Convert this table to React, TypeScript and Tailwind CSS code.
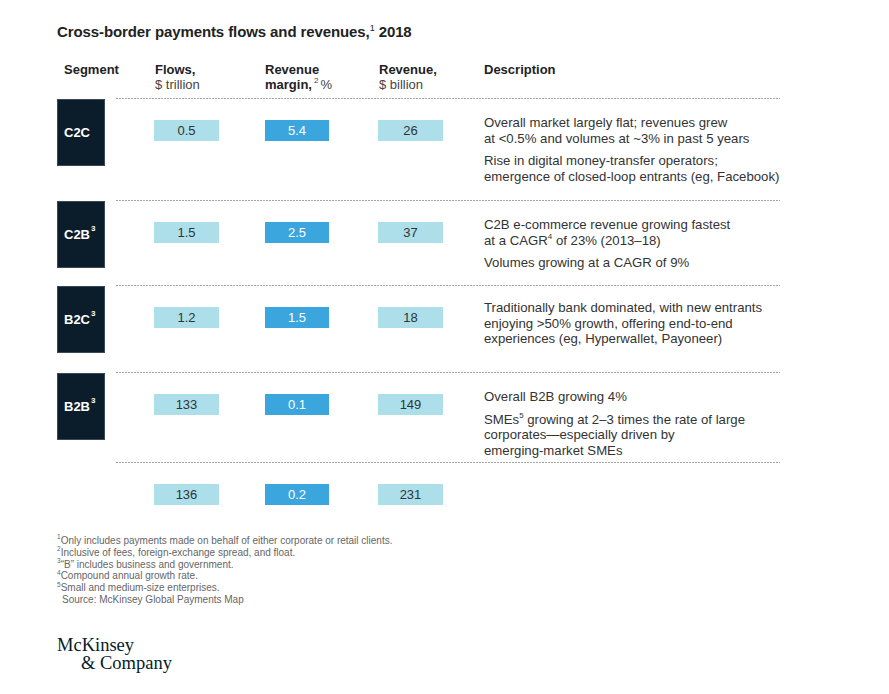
import React from "react";

const sans = { fontFamily: '"Liberation Sans", Arial, sans-serif' };

type Row = {
  seg: string;
  sup?: string;
  flows: string;
  margin: string;
  rev: string;
  desc: React.ReactNode[];
  h: string;
  descPt: string;
};

function Dashed() {
  return <div className="h-px w-full bg-[linear-gradient(to_right,#a3a3a3_60%,transparent_60%)] bg-[length:3px_1px] bg-repeat-x" />;
}

function Bars({ flows, margin, rev }: { flows: string; margin: string; rev: string }) {
  return (
    <div className="flex mt-[21px]">
      <div className="w-[38px] shrink-0" />
      <div className="w-[65px] h-[21px] bg-[#acdfea] text-[#333] text-[13px] flex items-center justify-center shrink-0">{flows}</div>
      <div className="w-[46px] shrink-0" />
      <div className="w-[64px] h-[21px] bg-[#3ba5dd] text-white text-[13px] flex items-center justify-center shrink-0">{margin}</div>
      <div className="w-[49px] shrink-0" />
      <div className="w-[65px] h-[21px] bg-[#acdfea] text-[#333] text-[13px] flex items-center justify-center shrink-0">{rev}</div>
    </div>
  );
}

const Sup = ({ children, cls = "text-[8px]" }: { children: React.ReactNode; cls?: string }) => (
  <sup className={`${cls} top-[-0.7em] relative`}>{children}</sup>
);

const rows: Row[] = [
  {
    seg: "C2C",
    flows: "0.5",
    margin: "5.4",
    rev: "26",
    h: "h-[102px]",
    descPt: "pt-[16px]",
    desc: [
      <>Overall market largely flat; revenues grew<br />at &lt;0.5% and volumes at ~3% in past 5 years</>,
      <>Rise in digital money-transfer operators;<br />emergence of closed-loop entrants (eg, Facebook)</>,
    ],
  },
  {
    seg: "C2B",
    sup: "3",
    flows: "1.5",
    margin: "2.5",
    rev: "37",
    h: "h-[85px]",
    descPt: "pt-[16px]",
    desc: [
      <>C2B e-commerce revenue growing fastest<br />at a CAGR<Sup>4</Sup> of 23% (2013–18)</>,
      <>Volumes growing at a CAGR of 9%</>,
    ],
  },
  {
    seg: "B2C",
    sup: "3",
    flows: "1.2",
    margin: "1.5",
    rev: "18",
    h: "h-[87px]",
    descPt: "pt-[14px]",
    desc: [
      <>Traditionally bank dominated, with new entrants<br />enjoying &gt;50% growth, offering end-to-end<br />experiences (eg, Hyperwallet, Payoneer)</>,
    ],
  },
  {
    seg: "B2B",
    sup: "3",
    flows: "133",
    margin: "0.1",
    rev: "149",
    h: "h-[90px]",
    descPt: "pt-[16px]",
    desc: [
      <>Overall B2B growing 4%</>,
      <>SMEs<Sup>5</Sup> growing at 2–3 times the rate of large<br />corporates—especially driven by<br />emerging-market SMEs</>,
    ],
  },
];

export default function App() {
  return (
    <div className="w-[889px] h-[694px] bg-white pl-[57px] pt-[22px] overflow-hidden" style={sans}>
      <div className="text-[15px] leading-[20px] font-bold text-[#222] tracking-[-0.1px]">
        Cross-border payments flows and revenues,<Sup cls="text-[9px] font-normal">1</Sup> 2018
      </div>

      {/* Header */}
      <div className="flex mt-[20px] text-[13px] leading-[15px] text-[#222]">
        <div className="w-[59px] shrink-0 pl-[7px] font-bold">Segment</div>
        <div className="w-[38px] shrink-0" />
        <div className="w-[111px] shrink-0 pl-[1px]">
          <div className="font-bold">Flows,</div>
          <div className="text-[#444]">$ trillion</div>
        </div>
        <div className="w-[113px] shrink-0">
          <div className="font-bold">Revenue</div>
          <div>
            <span className="font-bold">margin,</span>
            <Sup cls="text-[8px] text-[#444] mx-[2px]">2</Sup>
            <span className="text-[#444]">%</span>
          </div>
        </div>
        <div className="w-[106px] shrink-0 pl-[1px]">
          <div className="font-bold">Revenue,</div>
          <div className="text-[#444]">$ billion</div>
        </div>
        <div className="font-bold">Description</div>
      </div>

      {/* Rows */}
      <div className="mt-[6px]">
        {rows.map((r) => (
          <div key={r.seg} className={`flex ${r.h}`}>
            <div className="w-[59px] shrink-0 pt-[1px]">
              <div className="w-[48px] h-[67px] bg-[#0b1d2b] border border-[#3a4a58] text-white text-[13px] font-bold flex items-center pl-[6px]">
                {r.seg}
                {r.sup && <Sup cls="text-[8px] ml-[1px]">{r.sup}</Sup>}
              </div>
            </div>
            <div className="w-[664px] shrink-0 flex flex-col">
              <Dashed />
              <div className="flex">
                <Bars flows={r.flows} margin={r.margin} rev={r.rev} />
                <div className={`ml-[41px] ${r.descPt} text-[13.2px] leading-[15.5px] text-[#333] whitespace-nowrap flex flex-col gap-[7px]`}>
                  {r.desc.map((d, i) => (
                    <div key={i}>{d}</div>
                  ))}
                </div>
              </div>
            </div>
          </div>
        ))}
        <div className="flex h-[73px]">
          <div className="w-[59px] shrink-0" />
          <div className="w-[664px] shrink-0 flex flex-col">
            <Dashed />
            <Bars flows="136" margin="0.2" rev="231" />
          </div>
        </div>
      </div>

      {/* Footnotes */}
      <div className="text-[10px] leading-[11.8px] text-[#666]">
        <div><Sup cls="text-[6.5px]">1</Sup>Only includes payments made on behalf of either corporate or retail clients.</div>
        <div><Sup cls="text-[6.5px]">2</Sup>Inclusive of fees, foreign-exchange spread, and float.</div>
        <div><Sup cls="text-[6.5px]">3</Sup>“B” includes business and government.</div>
        <div><Sup cls="text-[6.5px]">4</Sup>Compound annual growth rate.</div>
        <div><Sup cls="text-[6.5px]">5</Sup>Small and medium-size enterprises.</div>
        <div className="pl-[5px]">Source: McKinsey Global Payments Map</div>
      </div>

      {/* Logo */}
      <div className="mt-[30px] text-[#051c2c] text-[18.5px] leading-[18px]" style={{ fontFamily: '"Liberation Serif", "Times New Roman", serif' }}>
        <div>McKinsey</div>
        <div className="pl-[24px]">&amp; Company</div>
      </div>
    </div>
  );
}
